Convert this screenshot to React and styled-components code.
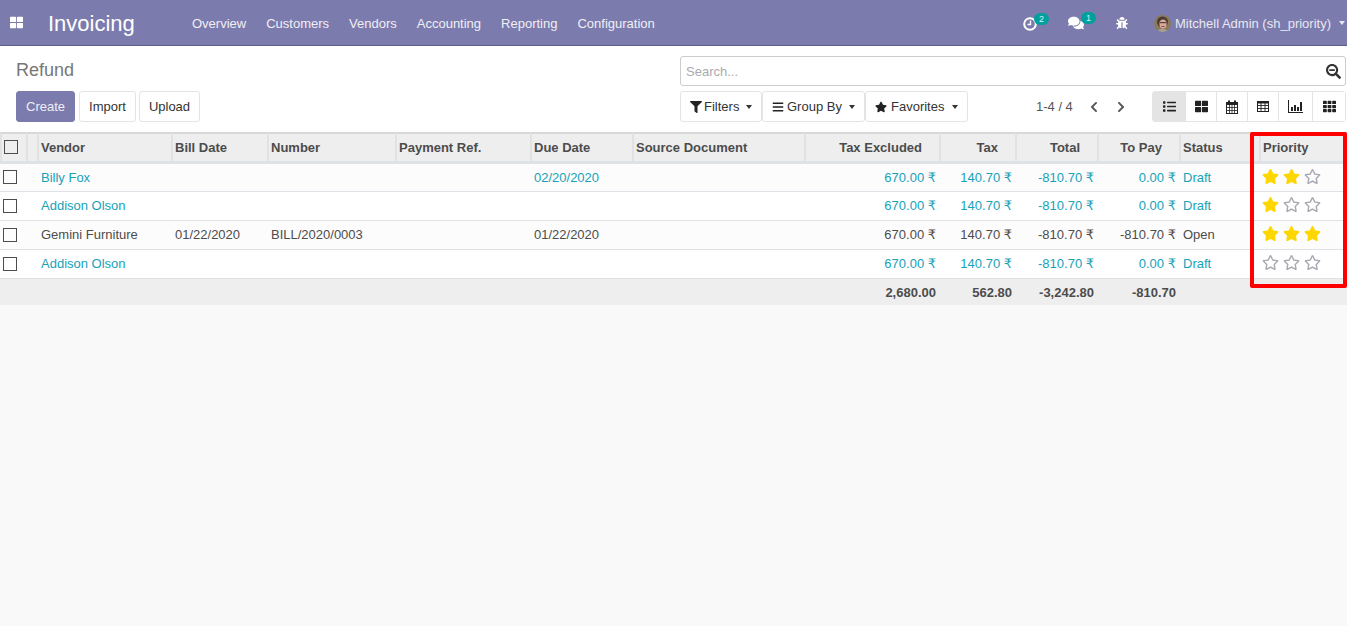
import React from "react";
import styled, { createGlobalStyle } from "styled-components";
import {
  FaBars,
  FaBug,
  FaChevronLeft,
  FaChevronRight,
  FaComments,
  FaFilter,
  FaList,
  FaRegStar,
  FaSearchMinus,
  FaStar,
  FaTh,
  FaThLarge,
} from "react-icons/fa";

const GlobalStyle = createGlobalStyle`
  html, body {
    margin: 0;
    height: 100%;
    background: #f9f9f9;
  }
  body {
    font-family: "Liberation Sans", Arial, sans-serif;
    font-size: 13px;
    color: #4c4c4c;
    overflow: hidden;
  }
`;

// Top bar
const Navbar = styled.header`
  height: 44px;
  background: #7c7bad;
  border-bottom: 1px solid #5d5c8d;
  display: flex;
  align-items: center;
  color: #fff;
  padding-top: 1px;
`;

const AppsButton = styled.span`
  width: 32px;
  display: flex;
  justify-content: center;
  font-size: 13px;
  margin-top: -2px;
`;

const Brand = styled.span`
  font-size: 22px;
  margin: 2px 0 0 16px;
  width: 144px;
`;

const Menu = styled.nav`
  display: flex;
  gap: 20px;
  color: #f0eff6;
`;

const Systray = styled.div`
  margin-left: auto;
  padding-right: 2px;
  display: flex;
  align-items: center;
  color: #e9e8f2;
`;

const TrayIcon = styled.span`
  position: relative;
  display: flex;
  font-size: ${(p) => p.$size || 14}px;
  color: #fff;
  margin-right: ${(p) => p.$gap}px;
`;

const Badge = styled.span`
  position: absolute;
  left: ${(p) => p.$left}px;
  top: -3px;
  width: 15px;
  height: 12px;
  border-radius: 6px;
  background: #00a09d;
  color: #d5f2f1;
  font-size: 9px;
  line-height: 12px;
  text-align: center;
`;

const Avatar = styled.svg`
  width: 17px;
  height: 17px;
  border-radius: 50%;
  margin-right: 4px;
`;

const Caret = styled.span`
  display: inline-block;
  border-top: 4px solid currentColor;
  border-left: 3.5px solid transparent;
  border-right: 3.5px solid transparent;
  margin-left: ${(p) => p.$gap || 7}px;
`;

// Control panel
const ControlPanel = styled.section`
  height: 86px;
  box-sizing: border-box;
  background: #fff;
  padding: 10px 3px 0 16px;
  display: grid;
  grid-template-columns: 664px 1fr;
  grid-template-rows: 30px 31px;
  row-gap: 5px;
`;

const Breadcrumb = styled.h1`
  margin: -1px 0 0;
  font-size: 18px;
  font-weight: 400;
  line-height: 30px;
  color: #777;
`;

const SearchBox = styled.div`
  display: flex;
  align-items: center;
  justify-content: space-between;
  box-sizing: border-box;
  height: 30px;
  border: 1px solid #ccc;
  border-radius: 3px;
  padding: 0 4px 0 5px;
  color: #aaa;

  svg {
    color: #333;
    font-size: 15px;
  }
`;

const Row = styled.div`
  display: flex;
  align-items: center;
  gap: ${(p) => p.$gap || 0}px;
`;

const Button = styled.button`
  height: 31px;
  box-sizing: border-box;
  width: ${(p) => (p.$w ? `${p.$w}px` : "auto")};
  padding: 0 9px;
  margin-right: ${(p) => (p.$primary ? 1 : 0)}px;
  font: inherit;
  white-space: nowrap;
  display: flex;
  align-items: center;
  background: ${(p) => (p.$primary ? "#7c7bad" : "#fff")};
  color: ${(p) => (p.$primary ? "#f0eff6" : "#333")};
  border: 1px solid ${(p) => (p.$primary ? "#7c7bad" : "#e4e4e4")};
  border-radius: 3px;

  svg {
    flex: none;
    margin-right: ${(p) => p.$iconGap || 3}px;
    font-size: 12px;
    color: #222;
  }
`;

const Pager = styled.div`
  margin-left: 68px;
  width: 116px;
  display: flex;
  align-items: center;
  color: #555;

  svg {
    color: #555;
    font-size: 12px;
    margin-left: 15px;
  }

  svg + svg {
    margin-left: 15px;
  }
`;

const ViewSwitcher = styled.div`
  display: flex;
  height: 31px;
  border: 1px solid #e4e4e4;
  border-radius: 3px;
  box-sizing: border-box;
`;

const ViewButton = styled.span`
  width: ${(p) => p.$w || 30}px;
  display: flex;
  align-items: center;
  justify-content: center;
  font-size: 13px;
  color: #222;
  background: ${(p) => (p.$active ? "#e4e4e4" : "#fff")};
  border-left: ${(p) => (p.$first ? "none" : "1px solid #e4e4e4")};
`;

const GlyphSvg = styled.svg`
  display: block;
  width: ${(p) => p.$w}px;
  height: ${(p) => p.$h}px;
`;

// Table
const TableWrap = styled.div`
  position: relative;
`;

const Table = styled.table`
  width: 1347px;
  table-layout: fixed;
  border-collapse: separate;
  border-spacing: 0;
  background: #fff;
`;

const HeadCell = styled.th`
  height: 32px;
  box-sizing: border-box;
  background: #eee;
  color: #4c4c4c;
  font-size: 13px;
  font-weight: 700;
  text-align: ${(p) => (p.$right ? "right" : "left")};
  padding: 0 ${(p) => (p.$right ? 17 : 2)}px 0 2px;
  border-top: 2px solid #d8d8d8;
  border-bottom: 3px solid #dee2e6;
  border-left: 2px solid #e2e2e2;
`;

const BodyRow = styled.tr`
  height: ${(p) => (p.$first ? 28 : 29)}px;
  background: ${(p) => (p.$odd ? "#fcfcfc" : "#fff")};

  &:not(:first-child) td {
    padding-bottom: 2px;
  }
`;

const Cell = styled.td`
  padding: 0 3px 0 4px;
  box-sizing: border-box;
  white-space: nowrap;
  text-align: ${(p) => (p.$right ? "right" : "left")};
  color: ${(p) => (p.$link ? "#17a2b8" : "#4c4c4c")};
  border-bottom: 1px solid #dee2e6;
`;

const CheckCell = styled(Cell)`
  tr:not(:first-child) && {
    padding-bottom: 0;
  }
`;

const TotalCell = styled.td`
  padding: 0 3px 0 4px;
  text-align: right;
  color: #4c4c4c;
`;

const Footer = styled.tr`
  height: 26px;
  background: #eee;
  font-weight: 700;
`;

const Rupee = styled.span`
  font-family: "DejaVu Sans", sans-serif;
`;

const Check = styled.span`
  display: block;
  width: 14px;
  height: 14px;
  box-sizing: border-box;
  border: 1px solid #4c4c4c;
  margin-left: ${(p) => p.$left}px;
  margin-bottom: ${(p) => p.$lift || 0}px;
`;

const Stars = styled.div`
  display: flex;
  gap: 4px;
  margin: 0 0 2px -1px;
  font-size: 17px;

  svg:not(.off) {
    color: #ffd700;
  }
  svg.off {
    color: #a9a9b2;
  }
`;

const Highlight = styled.div`
  position: absolute;
  left: 1250px;
  top: 0;
  width: 97px;
  height: 156px;
  box-sizing: border-box;
  border: 4px solid #f00;
  border-radius: 2px;
  pointer-events: none;
`;

const widths = [26, 11, 134, 96, 128, 135, 102, 172, 135, 76, 82, 82, 80, 88];

const heads = [
  ["", false],
  ["Vendor", false],
  ["Bill Date", false],
  ["Number", false],
  ["Payment Ref.", false],
  ["Due Date", false],
  ["Source Document", false],
  ["Tax Excluded", true],
  ["Tax", true],
  ["Total", true],
  ["To Pay", true],
  ["Status", false],
  ["Priority", false],
];

const rows = [
  { vendor: "Billy Fox", due: "02/20/2020", pay: "0.00", status: "Draft", stars: 2, link: true },
  { vendor: "Addison Olson", pay: "0.00", status: "Draft", stars: 1, link: true },
  {
    vendor: "Gemini Furniture",
    bill: "01/22/2020",
    number: "BILL/2020/0003",
    due: "01/22/2020",
    pay: "-810.70",
    status: "Open",
    stars: 3,
  },
  { vendor: "Addison Olson", pay: "0.00", status: "Draft", stars: 0, link: true },
];

const ClockIcon = () => (
  <GlyphSvg $w={14} $h={15} viewBox="0 0 14 15" fill="none" stroke="#fff">
    <circle cx="7" cy="8" r="5.8" strokeWidth="2" />
    <path d="M7.5 4.5v4H4.5" strokeWidth="1.3" />
  </GlyphSvg>
);

const CalendarIcon = () => (
  <GlyphSvg $w={12} $h={14} viewBox="0 0 12 14" fill="none" stroke="#222">
    <rect x=".5" y="2.5" width="11" height="11" fill="#fff" />
    <rect x="0" y="2" width="12" height="3" fill="#222" stroke="none" />
    <path d="M3 .5v3M9 .5v3" strokeWidth="2" />
    <path d="M0 7.5h12M0 10.5h12M3.5 5v8M6 5v8M8.5 5v8" strokeWidth=".8" />
  </GlyphSvg>
);

const TableIcon = () => (
  <GlyphSvg $w={12} $h={11} viewBox="0 0 12 11" fill="none" stroke="#222">
    <rect x=".5" y=".5" width="11" height="10" />
    <path d="M0 1.5h12" strokeWidth="2" />
    <path d="M0 4.5h12M0 7.5h12M4 2v8M8 2v8" strokeWidth=".9" />
  </GlyphSvg>
);

const BarsIcon = () => (
  <GlyphSvg $w={15} $h={13} viewBox="0 0 15 13" fill="#222">
    <rect x="0" y="0" width="1" height="13" />
    <rect x="0" y="12" width="15" height="1" />
    <rect x="3" y="7" width="2" height="4" />
    <rect x="6" y="5" width="2" height="6" />
    <rect x="9" y="7" width="2" height="4" />
    <rect x="12" y="2" width="2" height="9" />
  </GlyphSvg>
);

const Rating = ({ value }) => (
  <Stars>
    {[1, 2, 3].map((n) =>
      n <= value ? <FaStar key={n} /> : <FaRegStar key={n} className="off" />
    )}
  </Stars>
);

const App = () => (
  <>
    <GlobalStyle />
    <Navbar>
      <AppsButton>
        <FaThLarge />
      </AppsButton>
      <Brand>Invoicing</Brand>
      <Menu>
        {["Overview", "Customers", "Vendors", "Accounting", "Reporting", "Configuration"].map((m) => (
          <span key={m}>{m}</span>
        ))}
      </Menu>
      <Systray>
        <TrayIcon $gap={31}>
          <ClockIcon />
          <Badge $left={11}>2</Badge>
        </TrayIcon>
        <TrayIcon $gap={32} $size={16}>
          <FaComments />
          <Badge $left={13}>1</Badge>
        </TrayIcon>
        <TrayIcon $gap={26} $size={12}>
          <FaBug />
        </TrayIcon>
        <Avatar viewBox="0 0 17 17">
          <rect width="17" height="17" fill="#8a7a5c" />
          <circle cx="8.5" cy="7" r="5.5" fill="#4a3b30" />
          <ellipse cx="9" cy="9" rx="3.6" ry="4.5" fill="#d8ab98" />
          <rect x="6" y="7" width="6" height="1.2" fill="#5a3f3f" />
          <rect x="7.5" y="11" width="3" height="1" fill="#a0413f" />
          <path d="M3 17c1-4 10-4 11 0z" fill="#a8a29a" />
        </Avatar>
        <span>Mitchell Admin (sh_priority)</span>
        <Caret $gap={8} />
      </Systray>
    </Navbar>

    <ControlPanel>
      <Breadcrumb>Refund</Breadcrumb>
      <SearchBox>
        Search...
        <FaSearchMinus />
      </SearchBox>
      <Row $gap={3}>
        <Button $primary>Create</Button>
        <Button>Import</Button>
        <Button>Upload</Button>
      </Row>
      <Row>
        <Button $w={82} $iconGap={2}>
          <FaFilter />
          Filters
          <Caret />
        </Button>
        <Button $w={103}>
          <FaBars />
          Group By
          <Caret />
        </Button>
        <Button $w={103} $iconGap={4}>
          <FaStar />
          Favorites
          <Caret $gap={8} />
        </Button>
        <Pager>
          1-4 / 4
          <FaChevronLeft />
          <FaChevronRight />
        </Pager>
        <ViewSwitcher>
          <ViewButton $first $active $w={32}><FaList /></ViewButton>
          <ViewButton><FaThLarge /></ViewButton>
          <ViewButton><CalendarIcon /></ViewButton>
          <ViewButton><TableIcon /></ViewButton>
          <ViewButton $w={33}><BarsIcon /></ViewButton>
          <ViewButton $w={32}><FaTh /></ViewButton>
        </ViewSwitcher>
      </Row>
    </ControlPanel>

    <TableWrap>
      <Table>
        <colgroup>
          {widths.map((w, i) => (
            <col key={i} width={w} />
          ))}
        </colgroup>
        <thead>
          <tr>
            <HeadCell>
              <Check $left={0} $lift={2} />
            </HeadCell>
            {heads.map(([label, right], i) => (
              <HeadCell key={i} $right={right}>
                {label}
              </HeadCell>
            ))}
          </tr>
        </thead>
        <tbody>
          {rows.map((r, i) => (
            <BodyRow key={i} $odd={i % 2 === 0} $first={i === 0}>
              <CheckCell>
                <Check $left={-1} $lift={i === 0 ? 2 : 0} />
              </CheckCell>
              <Cell />
              <Cell $link={r.link}>{r.vendor}</Cell>
              <Cell>{r.bill}</Cell>
              <Cell>{r.number}</Cell>
              <Cell />
              <Cell $link={r.link}>{r.due}</Cell>
              <Cell />
              <Cell $right $link={r.link}>670.00 <Rupee>₹</Rupee></Cell>
              <Cell $right $link={r.link}>140.70 <Rupee>₹</Rupee></Cell>
              <Cell $right $link={r.link}>-810.70 <Rupee>₹</Rupee></Cell>
              <Cell $right $link={r.link}>{r.pay} <Rupee>₹</Rupee></Cell>
              <Cell $link={r.link}>{r.status}</Cell>
              <Cell>
                <Rating value={r.stars} />
              </Cell>
            </BodyRow>
          ))}
        </tbody>
        <tfoot>
          <Footer>
            <TotalCell colSpan={8} />
            <TotalCell>2,680.00</TotalCell>
            <TotalCell>562.80</TotalCell>
            <TotalCell>-3,242.80</TotalCell>
            <TotalCell>-810.70</TotalCell>
            <TotalCell colSpan={2} />
          </Footer>
        </tfoot>
      </Table>
      <Highlight />
    </TableWrap>
  </>
);

export default App;
